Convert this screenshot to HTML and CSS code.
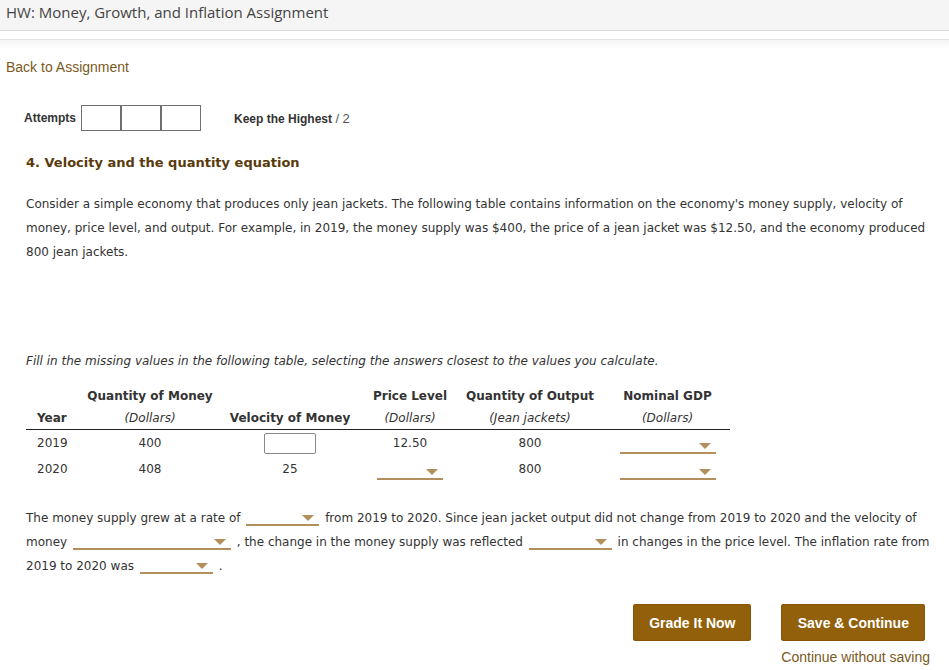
FILE: index.html
```html
<!DOCTYPE html>
<html>
<head>
<meta charset="utf-8">
<link rel="stylesheet" href="styles.css">
</head>
<body>
<div class="topbar">HW: Money, Growth, and Inflation Assignment</div>
<div class="subbar"></div>
<div class="shade"></div>
<a class="back" href="#">Back to Assignment</a>
<div class="attempts">
  <span class="att-label">Attempts</span>
  <span class="boxes"><span class="box"></span><span class="box"></span><span class="box"></span></span>
  <span class="keep">Keep the Highest <span class="slash">/ 2</span></span>
</div>
<div class="content">
  <h2 class="qtitle">4. Velocity and the quantity equation</h2>
  <p class="intro">Consider a simple economy that produces only jean jackets. The following table contains information on the economy's money supply, velocity of money, price level, and output. For example, in 2019, the money supply was $400, the price of a jean jacket was $12.50, and the economy produced 800 jean jackets.</p>
  <p class="instr">Fill in the missing values in the following table, selecting the answers closest to the values you calculate.</p>
  <table class="data">
    <colgroup>
      <col class="c1"><col class="c2"><col class="c3"><col class="c4"><col class="c5"><col class="c6">
    </colgroup>
    <thead>
      <tr class="h1"><th></th><th>Quantity of Money</th><th></th><th>Price Level</th><th>Quantity of Output</th><th>Nominal GDP</th></tr>
      <tr class="h2"><th class="left">Year</th><th><em>(Dollars)</em></th><th>Velocity of Money</th><th><em>(Dollars)</em></th><th><em>(Jean jackets)</em></th><th><em>(Dollars)</em></th></tr>
    </thead>
    <tbody>
      <tr><td class="left">2019</td><td>400</td><td><span class="inbox"></span></td><td>12.50</td><td>800</td><td><span class="dd w96"></span></td></tr>
      <tr><td class="left">2020</td><td>408</td><td>25</td><td><span class="dd w66"></span></td><td>800</td><td><span class="dd w96"></span></td></tr>
    </tbody>
  </table>
  <p class="fill">The money supply grew at a rate of <span class="dd w73"></span> from 2019 to 2020. Since jean jacket output did not change from 2019 to 2020 and the velocity of<br>money <span class="dd w158"></span> , the change in the money supply was reflected <span class="dd w83"></span> in changes in the price level. The inflation rate from<br>2019 to 2020 was <span class="dd w73"></span> .</p>
</div>
<div class="actions">
  <button class="btn grade">Grade It Now</button>
  <div class="savecol">
    <button class="btn save">Save &amp; Continue</button>
    <a class="nosave" href="#">Continue without saving</a>
  </div>
</div>
</body>
</html>
```

FILE: styles.css
```css
html, body {
  margin: 0;
  padding: 0;
  background: #fff;
}
body {
  width: 949px;
  height: 670px;
  overflow: hidden;
  font-family: "DejaVu Sans", Verdana, sans-serif;
  color: #333;
}
.topbar {
  height: 31px;
  box-sizing: border-box;
  background: #f5f5f5;
  border-bottom: 1px solid #d8d8d8;
  font-family: "Open Sans", sans-serif;
  font-size: 15px;
  color: #444;
  padding: 2px 0 0 6px;
}
.subbar {
  height: 8px;
  border-bottom: 1px solid #e2e2e2;
}
.shade {
  height: 9px;
  background: linear-gradient(#f4f4f4, #fff);
}
.back {
  display: block;
  margin-top: 9px;
  margin-left: 6px;
  font-family: "Liberation Sans", Arial, sans-serif;
  font-size: 14px;
  color: #7a5a1c;
  text-decoration: none;
  line-height: 18px;
}
.attempts {
  display: flex;
  align-items: center;
  margin-top: 29px;
  margin-left: 24px;
  font-family: "Liberation Sans", Arial, sans-serif;
  font-size: 12px;
  font-weight: bold;
  color: #333;
  height: 26px;
}
.att-label {
  margin-right: 5px;
}
.boxes {
  display: flex;
}
.box {
  box-sizing: border-box;
  width: 40px;
  height: 26px;
  border: 1px solid #6f6f6f;
}
.keep {
  margin-left: 33px;
}
.slash {
  font-weight: normal;
  font-size: 13px;
  color: #555;
}
.content {
  padding-left: 26px;
  width: 912px;
}
.qtitle {
  margin: 23px 0 0 0;
  font-size: 13px;
  font-weight: bold;
  color: #5a3a0c;
  line-height: 18px;
}
.intro {
  margin: 20px 0 0 0;
  font-size: 12px;
  line-height: 24px;
}
.instr {
  margin: 88px 0 0 0;
  font-size: 12px;
  font-style: italic;
  line-height: 18px;
}
.data {
  margin-top: 15px;
  border-collapse: collapse;
  width: 704px;
  font-size: 12px;
  table-layout: fixed;
}
.c1 { width: 59px; }
.c2 { width: 130px; }
.c3 { width: 150px; }
.c4 { width: 90px; }
.c5 { width: 150px; }
.c6 { width: 125px; }
.data th {
  font-weight: bold;
  text-align: center;
  padding: 0;
  white-space: nowrap;
}
.data th em {
  font-weight: normal;
  font-style: italic;
}
.data .h1 th { height: 22px; vertical-align: middle; }
.data .h2 th {
  height: 21px;
  vertical-align: middle;
  border-bottom: 1px solid #222;
  padding-bottom: 1px;
}
.data td {
  text-align: center;
  padding: 0;
  height: 26px;
  vertical-align: middle;
}
.data .left {
  text-align: left;
  padding-left: 11px;
}
.inbox {
  display: inline-block;
  width: 50px;
  height: 19px;
  border: 1px solid #888;
  border-radius: 2px;
  vertical-align: middle;
}
.dd {
  display: inline-block;
  position: relative;
  height: 14px;
  border-bottom: 2px solid #b28f5c;
  vertical-align: middle;
}
.dd::after {
  content: "";
  position: absolute;
  right: 5px;
  top: 5px;
  border-left: 6px solid transparent;
  border-right: 6px solid transparent;
  border-top: 6px solid #b28f5c;
}
.data .dd { margin-top: 6px; }
.w96 { width: 96px; }
.w66 { width: 66px; }
.w73 { width: 73px; }
.w158 { width: 158px; }
.w83 { width: 83px; }
.fill {
  margin: 24px 0 0 0;
  font-size: 12px;
  line-height: 24px;
}
.fill .dd {
  vertical-align: baseline;
  height: 12px;
  margin: 0 2px -4px 2px;
}
.fill .dd::after {
  top: 3px;
}
.actions {
  display: flex;
  justify-content: flex-end;
  margin-top: 26px;
  padding-right: 19px;
  gap: 30px;
}
.btn {
  height: 37px;
  border: none;
  border-radius: 3px;
  background: #925f0b;
  color: #fff;
  font-family: "Liberation Sans", Arial, sans-serif;
  font-weight: bold;
  font-size: 14px;
  padding: 0;
  box-shadow: inset 0 0 0 1px #86550a;
}
.grade { width: 118px; }
.save { width: 144px; }
.savecol {
  display: flex;
  flex-direction: column;
  align-items: flex-start;
}
.nosave {
  margin-top: 8px;
  font-family: "Liberation Sans", Arial, sans-serif;
  font-size: 14px;
  color: #7a5a1c;
  text-decoration: none;
}
```
